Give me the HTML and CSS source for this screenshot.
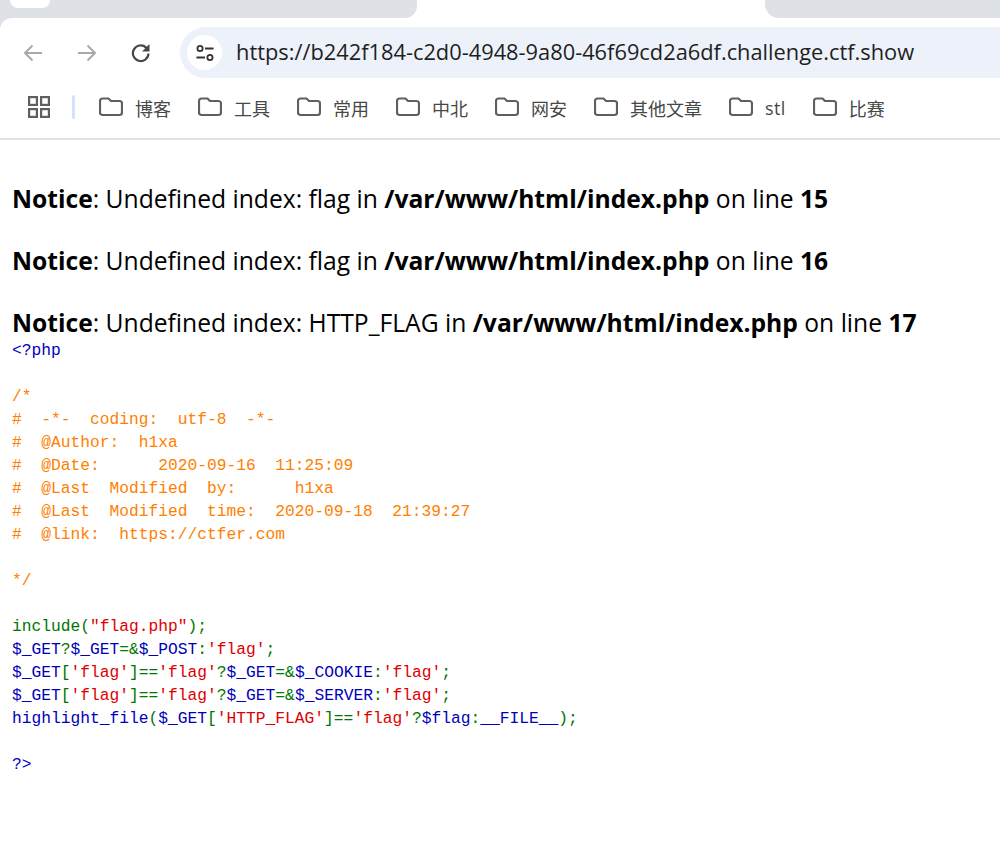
FILE: index.html
```html
<!DOCTYPE html>
<html lang="en">
<head>
<meta charset="utf-8">
<title>ctf.show</title>
<link rel="stylesheet" href="styles.css">
</head>
<body>
<header class="chrome">
  <div class="tabstrip">
    <div class="tabs-left"><div class="tab-stub"></div></div>
    <div class="tab-active"></div>
    <div class="tabs-right"></div>
  </div>
  <div class="toolbar">
    <svg class="nav nav-back" width="20" height="20" viewBox="0 0 20 20"><path d="M19 10H2M9.500 2.500 2 10l7.500 7.500" fill="none" stroke="#a9a9a9" stroke-width="2"/></svg>
    <svg class="nav nav-fwd" width="20" height="20" viewBox="0 0 20 20"><path d="M1 10H18M10.500 2.500 18 10l-7.500 7.500" fill="none" stroke="#a9a9a9" stroke-width="2"/></svg>
    <svg class="nav nav-reload" width="20" height="20" viewBox="0 0 20 20"><path d="M17.500 10.500a7.800 7.800 0 1 1-2.400-5.900L17 6.500" fill="none" stroke="#474747" stroke-width="2.200"/><path d="M18.500 1v7.500H11z" fill="#474747"/></svg>
    <div class="omnibox">
      <span class="site-info">
        <svg width="18" height="18" viewBox="0 0 20 20"><circle cx="4.500" cy="5" r="2.900" fill="none" stroke="#333" stroke-width="2"/><path d="M10 5h9.500M.5 15H10" stroke="#333" stroke-width="2.200" fill="none"/><circle cx="15.500" cy="15" r="2.900" fill="none" stroke="#333" stroke-width="2"/></svg>
      </span>
      <span class="url">https://b242f184-c2d0-4948-9a80-46f69cd2a6df.challenge.ctf.show</span>
    </div>
  </div>
  <nav class="bookmarks">
    <svg class="apps" width="22" height="22" viewBox="0 0 22 22"><g fill="none" stroke="#5f5f5f" stroke-width="2.200"><rect x="1.100" y="1.100" width="7.800" height="7.800"/><rect x="13.100" y="1.100" width="7.800" height="7.800"/><rect x="1.100" y="13.100" width="7.800" height="7.800"/><rect x="13.100" y="13.100" width="7.800" height="7.800"/></g></svg>
    <span class="divider"></span>
    <div class="marks">
      <a class="mark"><svg width="24" height="20" viewBox="0 0 24 20"><path class="folder" d="M1 4a2.500 2.500 0 0 1 2.500-2.500h6L12 4h8.500A2.500 2.500 0 0 1 23 6.500v9a2.500 2.500 0 0 1-2.500 2.500h-17A2.500 2.500 0 0 1 1 15.500z"/></svg><span class="label">博客</span></a>
      <a class="mark"><svg width="24" height="20" viewBox="0 0 24 20"><path class="folder" d="M1 4a2.500 2.500 0 0 1 2.500-2.500h6L12 4h8.500A2.500 2.500 0 0 1 23 6.500v9a2.500 2.500 0 0 1-2.500 2.500h-17A2.500 2.500 0 0 1 1 15.500z"/></svg><span class="label">工具</span></a>
      <a class="mark"><svg width="24" height="20" viewBox="0 0 24 20"><path class="folder" d="M1 4a2.500 2.500 0 0 1 2.500-2.500h6L12 4h8.500A2.500 2.500 0 0 1 23 6.500v9a2.500 2.500 0 0 1-2.500 2.500h-17A2.500 2.500 0 0 1 1 15.500z"/></svg><span class="label">常用</span></a>
      <a class="mark"><svg width="24" height="20" viewBox="0 0 24 20"><path class="folder" d="M1 4a2.500 2.500 0 0 1 2.500-2.500h6L12 4h8.500A2.500 2.500 0 0 1 23 6.500v9a2.500 2.500 0 0 1-2.500 2.500h-17A2.500 2.500 0 0 1 1 15.500z"/></svg><span class="label">中北</span></a>
      <a class="mark"><svg width="24" height="20" viewBox="0 0 24 20"><path class="folder" d="M1 4a2.500 2.500 0 0 1 2.500-2.500h6L12 4h8.500A2.500 2.500 0 0 1 23 6.500v9a2.500 2.500 0 0 1-2.500 2.500h-17A2.500 2.500 0 0 1 1 15.500z"/></svg><span class="label">网安</span></a>
      <a class="mark"><svg width="24" height="20" viewBox="0 0 24 20"><path class="folder" d="M1 4a2.500 2.500 0 0 1 2.500-2.500h6L12 4h8.500A2.500 2.500 0 0 1 23 6.500v9a2.500 2.500 0 0 1-2.500 2.500h-17A2.500 2.500 0 0 1 1 15.500z"/></svg><span class="label">其他文章</span></a>
      <a class="mark"><svg width="24" height="20" viewBox="0 0 24 20"><path class="folder" d="M1 4a2.500 2.500 0 0 1 2.500-2.500h6L12 4h8.500A2.500 2.500 0 0 1 23 6.500v9a2.500 2.500 0 0 1-2.500 2.500h-17A2.500 2.500 0 0 1 1 15.500z"/></svg><span class="label latin">stl</span></a>
      <a class="mark"><svg width="24" height="20" viewBox="0 0 24 20"><path class="folder" d="M1 4a2.500 2.500 0 0 1 2.500-2.500h6L12 4h8.500A2.500 2.500 0 0 1 23 6.500v9a2.500 2.500 0 0 1-2.500 2.500h-17A2.500 2.500 0 0 1 1 15.500z"/></svg><span class="label">比赛</span></a>
    </div>
  </nav>
</header>
<main class="page">
  <div class="notices"><br>
<b>Notice</b>: Undefined index: flag in <b>/var/www/html/index.php</b> on line <b>15</b><br><br>
<b>Notice</b>: Undefined index: flag in <b>/var/www/html/index.php</b> on line <b>16</b><br><br>
<b>Notice</b>: Undefined index: HTTP_FLAG in <b>/var/www/html/index.php</b> on line <b>17</b></div>
<pre class="code"><span class="k">&lt;?php</span>

<span class="c">/*
#  -*-  coding:  utf-8  -*-
#  @Author:  h1xa
#  @Date:      2020-09-16  11:25:09
#  @Last  Modified  by:      h1xa
#  @Last  Modified  time:  2020-09-18  21:39:27
#  @link:  https://ctfer.com

*/</span>

<span class="d">include(</span><span class="s">"flag.php"</span><span class="d">);</span>
<span class="k">$_GET</span><span class="d">?</span><span class="k">$_GET</span><span class="d">=&amp;</span><span class="k">$_POST</span><span class="d">:</span><span class="s">'flag'</span><span class="d">;</span>
<span class="k">$_GET</span><span class="d">[</span><span class="s">'flag'</span><span class="d">]==</span><span class="s">'flag'</span><span class="d">?</span><span class="k">$_GET</span><span class="d">=&amp;</span><span class="k">$_COOKIE</span><span class="d">:</span><span class="s">'flag'</span><span class="d">;</span>
<span class="k">$_GET</span><span class="d">[</span><span class="s">'flag'</span><span class="d">]==</span><span class="s">'flag'</span><span class="d">?</span><span class="k">$_GET</span><span class="d">=&amp;</span><span class="k">$_SERVER</span><span class="d">:</span><span class="s">'flag'</span><span class="d">;</span>
<span class="k">highlight_file</span><span class="d">(</span><span class="k">$_GET</span><span class="d">[</span><span class="s">'HTTP_FLAG'</span><span class="d">]==</span><span class="s">'flag'</span><span class="d">?</span><span class="k">$flag</span><span class="d">:</span><span class="k">__FILE__</span><span class="d">);</span>

<span class="k">?&gt;</span></pre>
</main>
</body>
</html>
```
FILE: styles.css
```css
* { box-sizing: border-box; }
html, body { margin: 0; padding: 0; background: #fff; }
body { overflow: hidden; height: 843px; }

.chrome {
  background: linear-gradient(to right, #dee1e6 20px, #fff 20px);
}
.tabstrip { display: flex; height: 18px; }
.tabs-left {
  width: 417px;
  background: #dee1e6;
  border-bottom-right-radius: 12px;
  padding-left: 10px;
}
.tab-stub {
  width: 40px;
  height: 8px;
  background: #fff;
  border-radius: 0 0 10px 10px;
}
.tab-active { width: 348px; background: #fff; }
.tabs-right {
  flex: 1;
  background: #dee1e6;
  border-bottom-left-radius: 14px;
}

.toolbar {
  display: flex;
  align-items: center;
  height: 60px;
  padding: 9px 0 0 0;
  background: #fff;
  border-top-left-radius: 12px;
}
.nav { flex: none; }
.nav-back { margin-left: 23px; }
.nav-fwd { margin-left: 34px; }
.nav-reload { margin-left: 34px; }
.omnibox {
  display: flex;
  align-items: center;
  flex: 1;
  height: 51px;
  margin-left: 29px;
  padding-left: 7px;
  background: #edf2fa;
  border-radius: 26px 0 0 26px;
}
.site-info {
  display: flex;
  align-items: center;
  justify-content: center;
  width: 35px;
  height: 35px;
  border-radius: 50%;
  background: #fff;
}
.url {
  margin-left: 14px;
  padding-bottom: 2px;
  font: 21.820px/1 "Open Sans", "Noto Sans", sans-serif;
  color: #1f1f1f;
  white-space: nowrap;
}

.bookmarks {
  display: flex;
  align-items: center;
  height: 62px;
  padding: 0 0 2px 28px;
  background: #fff;
  border-bottom: 2px solid #e1e1e1;
}
.divider {
  width: 3px;
  height: 24px;
  margin-left: 22px;
  border-radius: 2px;
  background: #d3e3fd;
}
.marks { display: flex; gap: 27px; margin-left: 24px; }
.mark {
  display: flex;
  align-items: center;
  gap: 12px;
  font: 18px/24px "Noto Sans CJK SC", "Open Sans", sans-serif;
  color: #474747;
}
.label { padding-top: 2px; }
.latin { font-family: "Open Sans", sans-serif; letter-spacing: .4px; }
.folder {
  fill: none;
  stroke: #5f5f5f;
  stroke-width: 2.200;
}

.page { padding: 12px 12px 0; }
.notices {
  padding-bottom: 1px;
  font: 24.650px/31px "Open Sans", "Noto Sans", sans-serif;
  color: #000;
}
.code {
  margin: 0;
  font: 16.250px/23px "Liberation Mono", monospace;
  color: #000;
}
.k { color: #0000bb; }
.c { color: #ff8000; }
.d { color: #007700; }
.s { color: #dd0000; }
```
